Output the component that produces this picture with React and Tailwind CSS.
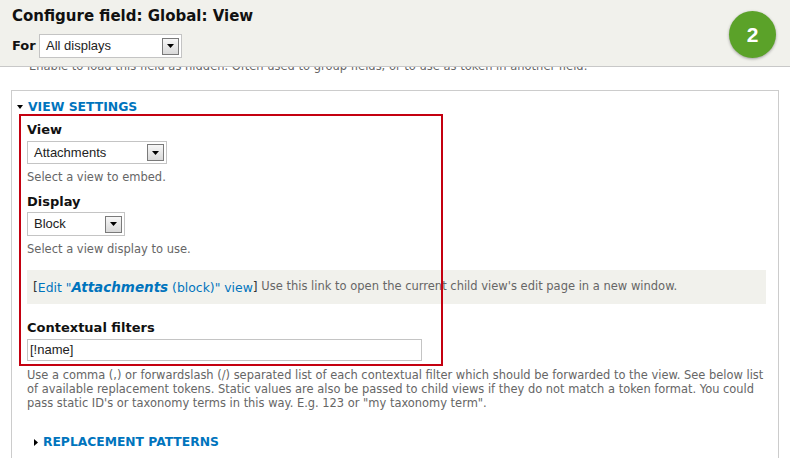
import React from "react";

function Arrow() {
  return (
    <div className="w-[17px] h-[17px] border border-[#7a7a7a] bg-gradient-to-b from-[#f7f7f7] to-[#d9d9d9] flex items-center justify-center shrink-0">
      <svg width="7" height="4" viewBox="0 0 7 4"><path d="M0 0H7L3.5 4Z" fill="#000" /></svg>
    </div>
  );
}

function Select({ className, text }) {
  return (
    <div className={"border border-[#c4c4c4] bg-white flex items-center justify-between pl-[6px] pr-[2px] font-['Liberation_Sans',Arial,sans-serif] text-[13px] text-[#222] " + className}>
      <span>{text}</span>
      <Arrow />
    </div>
  );
}

export default function App() {
  return (
    <div className="relative w-[790px] h-[458px] overflow-hidden bg-white font-['DejaVu_Sans',Verdana,sans-serif] text-[#333]">
      {/* header */}
      <div className="relative h-[67px] bg-[#f1f1ec] border-b border-[#c8c8c8] pl-[12px] pt-[6px]">
        <div className="text-[15px] font-bold leading-[20px] text-[#111]">Configure field: Global: View</div>
        <div className="flex items-center mt-[8px]">
          <span className="text-[13px] font-bold text-[#111] w-[27px]">For</span>
          <Select className="w-[143px] h-[24px]" text="All displays" />
        </div>
        <div className="absolute left-[729px] top-[11px] w-[47px] h-[47px] rounded-full bg-[#5ba229] shadow-[0_1px_3px_rgba(0,0,0,0.35)] flex items-center justify-center text-white font-bold text-[21px] font-['Liberation_Sans',Arial,sans-serif]">2</div>
      </div>
      {/* clipped text line */}
      <div className="h-[6px] overflow-hidden pl-[29px]">
        <div className="-mt-[8px] text-[11.5px] leading-[14px] text-[#666] whitespace-nowrap">
          Enable to load this field as hidden. Often used to group fields, or to use as token in another field.
        </div>
      </div>
      {/* fieldset */}
      <div className="ml-[11px] mt-[17px] w-[768px] h-[400px] border border-b-0 border-[#cccccc] pl-[15px] pr-[12px]">
        <div className="mt-[8px] h-[16px] flex items-center -ml-[10px]">
          <svg width="6" height="4" viewBox="0 0 6 4" className="mr-[5px]"><path d="M0 0H6L3 4Z" fill="#000" /></svg>
          <span className="text-[12.4px] font-bold text-[#0074bd] leading-[16px]">VIEW SETTINGS</span>
        </div>
        <div className="mt-[7px] h-[16px] leading-[16px] text-[13px] font-bold text-[#111]">View</div>
        <Select className="mt-[3px] w-[140px] h-[23px]" text="Attachments" />
        <div className="mt-[6px] h-[14px] leading-[14px] text-[11.5px] text-[#666]">Select a view to embed.</div>
        <div className="mt-[10px] h-[16px] leading-[16px] text-[13px] font-bold text-[#111]">Display</div>
        <Select className="mt-[2px] w-[98px] h-[24px]" text="Block" />
        <div className="mt-[6px] h-[14px] leading-[14px] text-[11.5px] text-[#666]">Select a view display to use.</div>
        <div className="mt-[14px] h-[34px] bg-[#f1f1ec] flex items-center pl-[6px] whitespace-nowrap">
          <span className="text-[#333] text-[12.4px]">[</span>
          <span className="text-[#0074bd] text-[12.4px]">Edit "<span className="font-bold italic text-[13.5px]">Attachments</span> (block)" view</span>
          <span className="text-[#333] text-[12.4px]">]</span>
          <span className="text-[#666] text-[11.5px]">&nbsp;Use this link to open the current child view's edit page in a new window.</span>
        </div>
        <div className="mt-[16px] h-[16px] leading-[16px] text-[13px] font-bold text-[#111]">Contextual filters</div>
        <div className="mt-[3px] w-[395px] h-[22px] border border-[#c4c4c4] flex items-center pl-[2px] font-['Liberation_Sans',Arial,sans-serif] text-[13px] text-[#222]">[!name]</div>
        <div className="mt-[7px] w-[740px] leading-[14px] text-[11.45px] text-[#666]">
          Use a comma (,) or forwardslash (/) separated list of each contextual filter which should be forwarded to the view. See below list of available replacement tokens. Static values are also be passed to child views if they do not match a token format. You could pass static ID's or taxonomy terms in this way. E.g. 123 or "my taxonomy term".
        </div>
        <div className="mt-[24px] h-[16px] flex items-center pl-[7px]">
          <svg width="4" height="7" viewBox="0 0 4 7" className="mr-[5px]"><path d="M0 0L4 3.5L0 7Z" fill="#000" /></svg>
          <span className="text-[12.3px] font-bold text-[#0074bd] leading-[16px]">REPLACEMENT PATTERNS</span>
        </div>
      </div>
      {/* red annotation box */}
      <div className="absolute left-[19px] top-[114px] w-[424px] h-[252px] border-2 border-[#c40010] pointer-events-none" />
    </div>
  );
}
